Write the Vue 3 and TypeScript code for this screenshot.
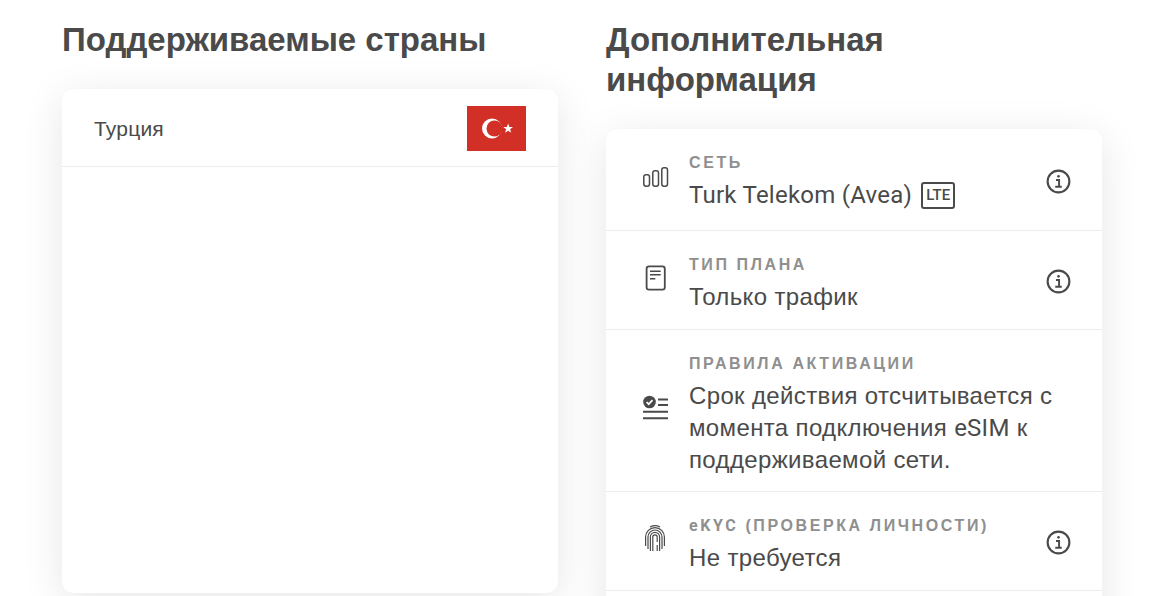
<template>
  <div class="page">
    <section class="col">
      <h2 class="title">Поддерживаемые страны</h2>
      <div class="card countries">
        <div class="country">
          <span class="country-name">Турция</span>
          <svg class="flag" viewBox="0 0 59 45" aria-label="Турция">
            <rect width="59" height="45" fill="#d22f27" />
            <circle cx="25" cy="22.5" r="10" fill="#fff" />
            <circle cx="27.5" cy="22.5" r="8" fill="#d22f27" />
            <polygon fill="#fff" transform="translate(0.6 0)" points="40.5,17.6 41.8,21 45.4,21.1 42.5,23.3 43.6,26.8 40.5,24.7 37.5,26.8 38.5,23.3 35.7,21.1 39.2,21" />
          </svg>
        </div>
      </div>
    </section>

    <section class="col">
      <h2 class="title">Дополнительная информация</h2>
      <div class="card">
        <div class="row row-net">
          <svg class="icon" viewBox="0 0 32 32" fill="none" stroke="#4a4a4a" stroke-width="1.5">
            <rect x="5.8" y="13.8" width="5.7" height="11.5" rx="2.2" />
            <rect x="14.8" y="9.8" width="5.7" height="15.5" rx="2.2" />
            <rect x="23.8" y="6.8" width="5.7" height="18.5" rx="2.2" />
          </svg>
          <div class="body">
            <div class="label">СЕТЬ</div>
            <div class="value">
              <span class="latin">Turk Telekom (Avea)</span>
              <span class="lte">LTE</span>
            </div>
          </div>
          <svg class="info" viewBox="0 0 26 26" fill="none" stroke="#4a4a4a">
            <circle cx="13" cy="13" r="11.3" stroke-width="2.2" />
            <circle cx="13" cy="7.6" r="1.4" fill="#4a4a4a" stroke="none" />
            <path d="M10.4 11.4h3.2v6.6M9.6 18.4h6.8" stroke-width="2" />
          </svg>
        </div>

        <div class="row row-plan">
          <svg class="icon" viewBox="0 0 32 32" fill="none" stroke="#4a4a4a" stroke-width="1.8">
            <rect x="8.6" y="4.4" width="18.2" height="23.2" rx="2.4" />
            <path d="M12 9.2h10.7M12 12.8h10.7M12 16.8h5.3" stroke-width="1.4" />
          </svg>
          <div class="body">
            <div class="label">ТИП ПЛАНА</div>
            <div class="value">Только трафик</div>
          </div>
          <svg class="info" viewBox="0 0 26 26" fill="none" stroke="#4a4a4a">
            <circle cx="13" cy="13" r="11.3" stroke-width="2.2" />
            <circle cx="13" cy="7.6" r="1.4" fill="#4a4a4a" stroke="none" />
            <path d="M10.4 11.4h3.2v6.6M9.6 18.4h6.8" stroke-width="2" />
          </svg>
        </div>

        <div class="row row-rules">
          <svg class="icon" viewBox="0 0 32 32" fill="none" stroke="#4a4a4a">
            <circle cx="11.5" cy="10" r="6.3" fill="#4a4a4a" stroke="none" />
            <path d="M8.6 10l2.1 2.2 3.8-4.1" stroke="#fff" stroke-width="1.7" />
            <path d="M20 7.5h10M20 13h10M5 19.7h25M5 26.3h25" stroke-width="2" />
          </svg>
          <div class="body">
            <div class="label">ПРАВИЛА АКТИВАЦИИ</div>
            <div class="value multi">
              Срок действия отсчитывается с<br />момента подключения <span class="latin">eSIM</span> к<br />поддерживаемой сети.
            </div>
          </div>
        </div>

        <div class="row row-kyc">
          <svg class="icon" viewBox="0 0 32 32" fill="none" stroke="#4a4a4a" stroke-width="1.2">
            <path d="M7.6 23V14a9.4 9.4 0 0 1 18.8 0v9" />
            <path d="M10 26V14a7 7 0 0 1 14 0v12" />
            <path d="M12.4 28V14a4.6 4.6 0 0 1 9.2 0v14" />
            <path d="M14.8 28V14a2.2 2.2 0 0 1 4.4 0v5M19.2 22v6" />
            <path d="M12 4a11 11 0 0 1 10 0" />
          </svg>
          <div class="body">
            <div class="label"><span class="latin">eKYC</span> (ПРОВЕРКА ЛИЧНОСТИ)</div>
            <div class="value">Не требуется</div>
          </div>
          <svg class="info" viewBox="0 0 26 26" fill="none" stroke="#4a4a4a">
            <circle cx="13" cy="13" r="11.3" stroke-width="2.2" />
            <circle cx="13" cy="7.6" r="1.4" fill="#4a4a4a" stroke="none" />
            <path d="M10.4 11.4h3.2v6.6M9.6 18.4h6.8" stroke-width="2" />
          </svg>
        </div>
        <div class="row-rest"></div>
      </div>
    </section>
  </div>
</template>

<script setup lang="ts">
</script>

<style>
html,
body {
  margin: 0;
  height: 596px;
  overflow: hidden;
  background: #fff;
}
</style>

<style scoped>
.page {
  display: grid;
  grid-template-columns: 496px 496px;
  gap: 48px;
  box-sizing: border-box;
  height: 596px;
  overflow: hidden;
  padding: 20px 0 0 62px;
  font-family: "Liberation Sans", Arial, sans-serif;
  color: #4a4a4a;
}

.title {
  max-width: 480px;
  margin: 0 0 29px;
  font-size: 33px;
  line-height: 40px;
  font-weight: 700;
  color: #4a4a4a;
}

.card {
  background: #fff;
  border-radius: 12px;
  box-shadow: 0 8px 40px rgba(0, 0, 0, 0.1);
}

.countries {
  height: 504px;
}

.country {
  display: flex;
  align-items: center;
  justify-content: space-between;
  box-sizing: border-box;
  height: 78px;
  padding: 2px 32px 0;
  border-bottom: 1px solid #ececec;
}

.country-name {
  font-size: 21px;
  letter-spacing: 0.2px;
}

.flag {
  width: 59px;
  height: 45px;
}

.row {
  display: flex;
  align-items: center;
  padding: 0 31px 0 32px;
  border-bottom: 1px solid #ececec;
}

.row-net {
  height: 101px;
}

.row-plan {
  height: 98px;
}

.row-rules {
  height: 161px;
}

.row-kyc {
  height: 98px;
}

.row-rest {
  height: 60px;
}

.icon {
  flex: none;
  width: 32px;
  height: 32px;
  margin-right: 19px;
  margin-bottom: 5px;
}

.body {
  flex: 1;
  align-self: flex-start;
  min-width: 0;
  padding-top: 24px;
}

.label {
  font-size: 16px;
  line-height: 20px;
  font-weight: 700;
  letter-spacing: 2.6px;
  color: #8f8f8f;
}

.value {
  display: flex;
  align-items: center;
  gap: 9px;
  margin-top: 6px;
  font-size: 24px;
  line-height: 32px;
  letter-spacing: 0.36px;
  color: #4a4a4a;
}

.value.multi {
  display: block;
}

.latin {
  font-family: Roboto, "Liberation Sans", sans-serif;
  letter-spacing: 0.25px;
}

.label .latin {
  letter-spacing: 2.6px;
}

.lte {
  display: inline-flex;
  align-items: center;
  justify-content: center;
  box-sizing: border-box;
  width: 34px;
  height: 27px;
  border: 2px solid #4a4a4a;
  border-radius: 3px;
  font-family: Roboto, "Liberation Sans", sans-serif;
  font-size: 15px;
  font-weight: 500;
  letter-spacing: 0;
  line-height: 1;
}

.info {
  flex: none;
  width: 25px;
  height: 25px;
  margin-top: 3px;
}
</style>
